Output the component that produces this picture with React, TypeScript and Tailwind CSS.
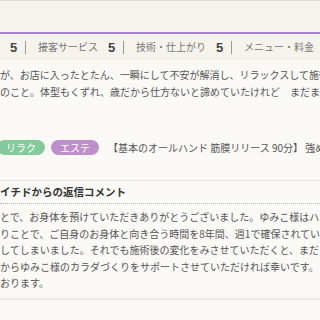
import React from 'react';

const jp = { fontFamily: '"Noto Sans CJK JP", "Noto Sans", sans-serif' };

const ratings = [
  { label: '雰囲気', score: 5 },
  { label: '接客サービス', score: 5 },
  { label: '技術・仕上がり', score: 5 },
  { label: 'メニュー・料金', score: 5 },
];

const reviewLines = [
  'が、お店に入ったとたん、一瞬にして不安が解消し、リラックスして施術を',
  'のこと。体型もくずれ、歳だから仕方ないと諦めていたけれど　まだまだ',
];

const replyLines = [
  'とで、お身体を預けていただきありがとうございました。ゆみこ様はハード',
  'りことで、ご自身のお身体と向き合う時間を8年間、週1で確保されていて',
  'してしまいました。それでも施術後の変化をみさせていただくと、まだまだ',
  'からゆみこ様のカラダづくりをサポートさせていただければ幸いです。',
  'おります。',
];

export default function App() {
  return (
    <div className="h-[320px] w-[320px] overflow-hidden bg-[#faf9f6]" style={jp}>
      <div className="h-[32px] border-t border-[#dedbd5] bg-[#f6f3ed]" />
      <div className="h-[2px] bg-[#a880d2]" />

      <div className="flex h-[26px] items-center whitespace-nowrap bg-[#f6f3ed] ml-[-30px]">
        {ratings.map((r, i) => (
          <div key={r.label} className="flex shrink-0 items-center">
            <span className="text-[10px] leading-none text-[#777]">{r.label}</span>
            <span className="ml-[10px] w-[7px] font-['Liberation_Sans'] text-[13px] font-bold leading-none text-[#444]">
              {r.score}
            </span>
            {i < ratings.length - 1 && <span className="ml-[8px] mr-[12px] h-[13px] w-px bg-[#999]" />}
          </div>
        ))}
      </div>

      <div className="pt-[7px] text-[10px] leading-[16.5px] text-[#555]">
        {reviewLines.map(l => (
          <div key={l} className="whitespace-nowrap">{l}</div>
        ))}
      </div>

      <div className="mt-[40px] flex h-[15px] items-center whitespace-nowrap">
        <span className="ml-[-3px] flex h-[15px] w-[48px] shrink-0 items-center justify-center rounded-full bg-[#86c99c] text-[10px] leading-none text-white">
          リラク
        </span>
        <span className="ml-[6px] flex h-[15px] w-[48px] shrink-0 items-center justify-center rounded-full bg-[#bf8fc9] text-[10px] leading-none text-white">
          エステ
        </span>
        <span className="ml-[9px] text-[10px] leading-none text-[#555]">
          【基本のオールハンド 筋膜リリース 90分】 強めの
        </span>
      </div>

      <div className="mt-[25px] border-t border-[#e4e2de]" />
      <div className="flex h-[22px] items-center whitespace-nowrap text-[10.5px] font-bold text-[#333]">
        イチドからの返信コメント
      </div>
      <div className="border-t border-dotted border-[#b5b5b5]" />

      <div className="pt-[5px] text-[10px] leading-[16.5px] text-[#555]">
        {replyLines.map(l => (
          <div key={l} className="whitespace-nowrap">{l}</div>
        ))}
      </div>

      <div className="mt-[6px] h-[2px] bg-[#ecebe8]" />
    </div>
  );
}
